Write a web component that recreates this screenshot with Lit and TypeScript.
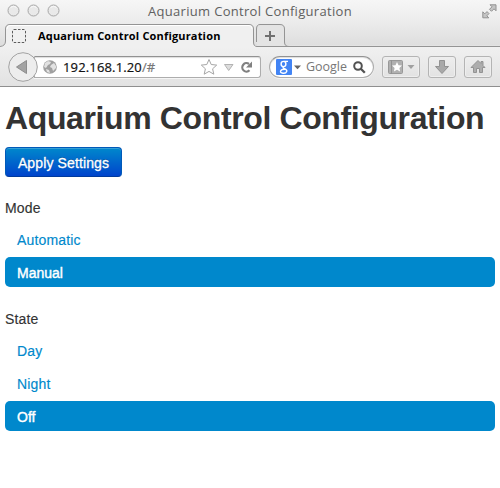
import { LitElement, html, css, svg } from "lit";
import { customElement, property, state } from "lit/decorators.js";
import { classMap } from "lit/directives/class-map.js";

@customElement("browser-chrome")
class BrowserChrome extends LitElement {
  @property() heading = "";

  static styles = css`
    :host { display: block; box-sizing: border-box; height: 87px; font-family: "Open Sans", "Noto Sans", sans-serif;
      background: linear-gradient(#f6f6f6 0, #ededed 20px, #dedede 45px, #f0f0f0 47px, #e2e2e2 86px);
      border-bottom: 1px solid #8f8f8f; }
    svg { display: block; flex: none; }
    .title { height: 24px; display: grid; grid-template-columns: 1fr auto 1fr; align-items: center; }
    .lights { padding-left: 7px; margin-top: -2px; }
    .name { font-size: 13px; line-height: 22px; padding-bottom: 2px; color: #606060; letter-spacing: 0.31px; white-space: nowrap; }
    .expand { justify-self: end; padding-right: 3px; margin-top: -2px; }
    .tabs { position: relative; height: 23px; display: flex; align-items: center; }
    .outline { position: absolute; left: 0; top: 0; }
    .tab { position: relative; display: flex; align-items: center; width: 242px; padding-left: 12px; gap: 12px;
      font-size: 11px; font-weight: 700; color: #000; box-sizing: border-box; white-space: nowrap; letter-spacing: 0.17px; }
    .plus { position: relative; margin-left: 22px; }
    .bar { height: 39px; display: flex; align-items: center; box-sizing: border-box; padding: 1px 8px 0 8px; }
    .back { position: relative; z-index: 1; }
    .field { box-sizing: border-box; height: 22px; border: 1px solid #adadad; border-top-color: #929292; background: #fff;
      box-shadow: inset 0 1px 1px #ddd, 0 1px 0 #f5f5f5; display: flex; align-items: center; white-space: nowrap; }
    .url { width: 228px; margin-left: -4px; border-radius: 0 3px 3px 0; padding: 0 7px 0 8px; font-size: 13px; color: #111; }
    .address { margin-left: 6px; flex: 1; letter-spacing: 0.15px; -webkit-text-stroke: 0.2px; }
    .hash { color: #777; }
    .search { width: 105px; margin-left: 8px; border-radius: 11px; padding: 0 7px 0 6px; font-size: 12.5px; color: #777; }
    .bar > .search { width: 106px; }
    .query { flex: 1; margin-left: 4px; }
    .btn { box-sizing: border-box; height: 22px; width: 28px; border: 1px solid #b4b4b4; border-radius: 3px; margin-left: 8px;
      background: linear-gradient(#eeeeee, #e2e2e2); box-shadow: inset 0 0 0 1px #eee; display: grid; place-items: center; }
    .wide { width: 38px; }
  `;

  render() {
    return html`
      <div class="title">
        <svg class="lights" width="56" height="14" viewBox="0 0 56 14">
          ${[6.5, 26.5, 46.5].map((x) => svg`<circle cx=${x} cy="6.500" r="5.500" fill="#e9e9e9" stroke="#a7a7a7"/>
            <path d="M${x - 3} 3.500Q${x} 1 ${x + 3} 3.500" fill="none" stroke="#fafafa"/>`)}
        </svg>
        <span class="name">${this.heading}</span>
        <svg class="expand" width="15" height="15" viewBox="0 0 15 15" fill="#c5c5c5" stroke="#929292">
          <path d="M8 .8h6v6l-2-2-2.500 2.500-2-2 2.500-2.500zM.8 7.800l2 2 2.200-2.200 2 2-2.200 2.200 2 2h-6z"/>
        </svg>
      </div>
      <div class="tabs">
        <svg class="outline" width="500" height="24" viewBox="0 0 500 24" fill="none">
          <path d="M0 22.500Q5.500 22 5.500 17V5Q5.500.5 10 .5H249Q253.500.5 253.500 5V18Q253.500 22.500 257 22.500V24H0z" fill="#f0f0f0"/>
          <path d="M255.500 18V5Q255.500.5 260 .5H280Q284.500.5 284.500 5V18Q284.500 22.500 289 22.500H258" fill="#e4e4e4"/>
          <path d="M0 22.500Q5.500 22 5.500 17V5Q5.500.5 10 .5H249Q253.500.5 253.500 5V18Q253.500 22.500 257 22.500H500M256.500 18V5Q256.500.5 260 .5H280Q284.500.5 284.500 5V18Q284.500 22.500 289 22.500" stroke="#949494"/>
          <path d="M7 5Q7 1.500 10 1.500H249Q252 1.500 252 5" stroke="#fff"/>
        </svg>
        <div class="tab">
          <svg width="14" height="14" viewBox="0 0 14 14"><rect x=".5" y=".5" width="13" height="13" rx="1.500" fill="none" stroke="#5c5c5c" stroke-dasharray="2.500 1.500"/></svg>
          <span>${this.heading}</span>
        </div>
        <svg class="plus" width="12" height="12" viewBox="0 0 12 12"><path d="M6 1v10M1 6h10" stroke="#707070" stroke-width="2"/></svg>
      </div>
      <div class="bar">
        <svg class="back" width="30" height="30" viewBox="0 0 30 30">
          <circle cx="15" cy="15" r="14.300" fill="#ededed" stroke="#a2a2a2"/>
          <path d="M8.500 15l10-6.500v13z" fill="#a3a3a3" stroke="#8d8d8d"/>
        </svg>
        <div class="field url">
          <svg width="14" height="14" viewBox="0 0 14 14"><circle cx="7" cy="7" r="6.800" fill="#a0a0a0"/>
            <path d="M2 3l3-2 3 1-1 2-2 1-2 3-2-1zM8 5l3-2 2 3v2l-3 3-1-3-2-1zM3 9l3 1 1 3-3-1z" fill="#e2e2e2"/></svg>
          <span class="address">192.168.1.20<span class="hash">/#</span></span>
          <svg width="54" height="18" viewBox="0 0 54 18">
            <path d="M10 1.500l2.200 5 5.500.6-4.100 3.700 1.200 5.400-4.800-2.800-4.800 2.800 1.200-5.400-4.100-3.700 5.500-.6z" fill="#fff" stroke="#a6a6a6"/>
            <path d="M25.500 6.500h8.500l-4.300 6z" fill="#ddd" stroke="#b3b3b3"/>
            <path d="M50.500 12.300A4.200 4.200 0 1 1 50 6" fill="none" stroke="#808080" stroke-width="2.200"/>
            <path d="M53 3.500v6h-6z" fill="#808080"/>
          </svg>
        </div>
        <div class="field search">
          <svg width="26" height="16" viewBox="0 0 26 16">
            <rect width="16" height="16" rx="1" fill="#4284f4"/>
            <g fill="none" stroke="#fff" stroke-width="1.400"><ellipse cx="7.500" cy="5" rx="2.400" ry="2.600"/><path d="M8 2.400h4M8.500 7.400q-3 1 0 2.300 2.800 1.200 2.200 2.800-.8 2-3.700 1.700-3-.4-2.400-2.200.7-1.700 4.400-1.700"/></g>
            <path d="M18 6.500h7l-3.500 3.800z" fill="#666"/>
          </svg>
          <span class="query">Google</span>
          <svg width="13" height="13" viewBox="0 0 13 13"><circle cx="5" cy="5" r="3.800" fill="none" stroke="#525252" stroke-width="2"/><path d="M7.800 7.800l4 4" stroke="#525252" stroke-width="2.300"/></svg>
        </div>
        <div class="btn wide">
          <svg width="28" height="16" viewBox="0 0 28 16"><rect x="1.500" y="1.500" width="14" height="13" rx="1" fill="#b0b0b0" stroke="#989898"/><path d="M4.500 1v14" stroke="#929292"/>
            <path d="M10 3l1.500 3.200 3.500.4-2.600 2.400.7 3.500-3.100-1.700-3.100 1.700.7-3.500L5 6.600l3.500-.4z" fill="#fff"/><path d="M20.500 6h7L24 10z" fill="#a0a0a0"/></svg>
        </div>
        <div class="btn"><svg width="16" height="16" viewBox="0 0 16 16"><path d="M5.500 1.500h5v6h4L8 14.500 1.500 7.500h4z" fill="#a9a9a9" stroke="#919191"/></svg></div>
        <div class="btn"><svg width="16" height="16" viewBox="0 0 16 16"><path d="M8 1.500l3 3v-2h2v4l2 2H12.500v5h-3v-4h-3v4h-3v-5H1z" fill="#adadad" stroke="#939393"/></svg></div>
      </div>`;
  }
}

@customElement("pill-group")
class PillGroup extends LitElement {
  @property() label = "";
  @property({ attribute: false }) options: string[] = [];
  @property() selected = "";

  static styles = css`
    :host { display: block; margin-bottom: 22px; letter-spacing: 0.15px; -webkit-text-stroke: 0.15px; }
    .label { line-height: 20px; margin-bottom: 6px; }
    .pills { display: flex; flex-direction: column; gap: 3px; }
    .pill { box-sizing: border-box; height: 30px; line-height: 20px; padding: 6px 12px 4px; border-radius: 5px; color: #0088cc; cursor: pointer; }
    .active { background: #0088cc; color: #fff; letter-spacing: 0; -webkit-text-stroke: 0.4px #fff; }
  `;

  render() {
    return html`
      <div class="label">${this.label}</div>
      <div class="pills">
        ${this.options.map((o) => html`<div class=${classMap({ pill: true, active: o === this.selected })}
          @click=${() => (this.selected = o)}>${o}</div>`)}
      </div>`;
  }
}

@customElement("app-root")
class AppRoot extends LitElement {
  @state() heading = "Aquarium Control Configuration";

  static styles = css`
    :host { display: block; height: 488px; overflow: hidden; background: #fff; color: #333;
      font: 14px/20px "Liberation Sans", Arial, sans-serif; }
    .page { padding: 10px 5px 0; }
    .heading { margin: 0; font-size: 32px; line-height: 42px; font-weight: 700; letter-spacing: -0.38px; white-space: nowrap; }
    .apply { display: block; box-sizing: border-box; width: 117px; height: 30px; margin: 8px 0 21px; padding: 1px 0 0; border: 1px solid #0059b8;
      border-bottom-color: #003a9c; border-radius: 4px; background: linear-gradient(#0088cc, #0044cc); color: #fff;
      font: 14px/20px "Liberation Sans", Arial, sans-serif; letter-spacing: 0.12px; text-shadow: 0 -1px 0 rgba(0, 0, 0, 0.25);
      -webkit-text-stroke: 0.3px #fff; box-shadow: inset 0 1px 0 rgba(255, 255, 255, 0.2); }
  `;

  render() {
    return html`
      <browser-chrome .heading=${this.heading}></browser-chrome>
      <div class="page">
        <h1 class="heading">${this.heading}</h1>
        <button class="apply">Apply Settings</button>
        <pill-group label="Mode" .options=${["Automatic", "Manual"]} selected="Manual"></pill-group>
        <pill-group label="State" .options=${["Day", "Night", "Off"]} selected="Off"></pill-group>
      </div>`;
  }
}
